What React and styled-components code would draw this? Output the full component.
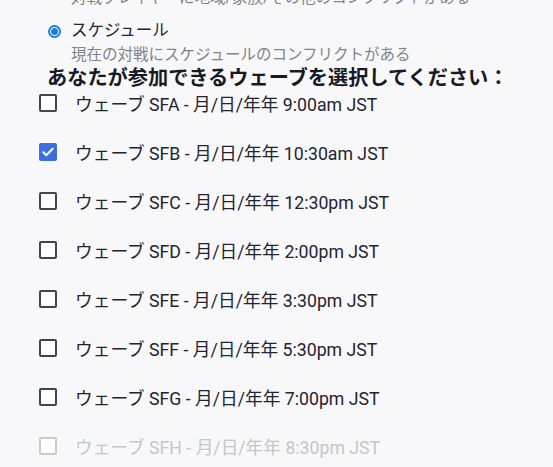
import styled, { createGlobalStyle } from "styled-components"

const GlobalStyle = createGlobalStyle`
  html, body {
    margin: 0;
    padding: 0;
    background: #f8f8fb;
  }
  body {
    font-family: Roboto, "Noto Sans CJK JP", sans-serif;
    color: #1f2430;
  }
`

const StPage = styled.div`
  margin-top: -13px;
  padding-left: 39px;
`

const StOptions = styled.div`
  display: flex;
  flex-direction: column;
  gap: 9px;
  padding-left: 9px;
`

const StOption = styled.label`
  display: grid;
  grid-template-columns: 13px 1fr;
  column-gap: 10px;
  align-items: center;
`

const StRadio = styled.span`
  width: 13px;
  height: 13px;
  box-sizing: border-box;
  border-radius: 50%;
  border: 2px solid ${p => (p.$checked ? "#1a7fd9" : "#767b85")};
  background: #fff;
  display: flex;
  align-items: center;
  justify-content: center;

  &::after {
    content: "";
    width: 7px;
    height: 7px;
    border-radius: 50%;
    background: ${p => (p.$checked ? "#1a7fd9" : "transparent")};
  }
`

const StOptionLabel = styled.span`
  font-size: 16.5px;
  line-height: 26px;
`

const StOptionDesc = styled.span`
  grid-column: 2;
  font-size: 15.5px;
  line-height: 22px;
  color: #7f848d;
`

const StHeading = styled.h3`
  margin: 0;
  padding-left: 8px;
  font-size: 20.2px;
  line-height: 24px;
  font-weight: 700;
  color: #161a24;
`

const StWaves = styled.div`
  display: flex;
  flex-direction: column;
  gap: 25px;
  margin-top: 1px;
`

const StWave = styled.label`
  display: flex;
  align-items: center;
  gap: 18px;
  height: 24px;
  font-size: 17.7px;
  color: ${p => (p.$disabled ? "#c3c6cc" : "#1f2430")};
`

const StBox = styled.span`
  flex: none;
  width: 18px;
  height: 18px;
  box-sizing: border-box;
  border-radius: 2px;
  border: 2px solid ${p => (p.$disabled ? "#c9ccd1" : p.$checked ? "#3a6fe2" : "#3d4452")};
  background: ${p => (p.$checked ? "#3a6fe2" : "#fff")};
  display: flex;
  align-items: center;
  justify-content: center;
`

const conflicts = [
  { label: "地域/家族/その他", desc: "対戦プレイヤーに地域/家族/その他のコンフリクトがある", checked: false, hideLabel: true },
  { label: "スケジュール", desc: "現在の対戦にスケジュールのコンフリクトがある", checked: true },
]

const waves = [
  { code: "SFA", time: "9:00am" },
  { code: "SFB", time: "10:30am", checked: true },
  { code: "SFC", time: "12:30pm" },
  { code: "SFD", time: "2:00pm" },
  { code: "SFE", time: "3:30pm" },
  { code: "SFF", time: "5:30pm" },
  { code: "SFG", time: "7:00pm" },
  { code: "SFH", time: "8:30pm", disabled: true },
]

function App () {
  return (
    <StPage>
      <GlobalStyle />
      <StOptions>
        {conflicts.map(c => (
          <StOption key={c.desc}>
            {!c.hideLabel && (
              <>
                <StRadio $checked={c.checked} />
                <StOptionLabel>{c.label}</StOptionLabel>
              </>
            )}
            <StOptionDesc>{c.desc}</StOptionDesc>
          </StOption>
        ))}
      </StOptions>
      <StHeading>あなたが参加できるウェーブを選択してください：</StHeading>
      <StWaves>
        {waves.map(w => (
          <StWave key={w.code} $disabled={w.disabled}>
            <StBox $checked={w.checked} $disabled={w.disabled}>
              {w.checked && (
                <svg width="14" height="14" viewBox="0 0 24 24" fill="none" stroke="#fff" strokeWidth="3.5" strokeLinecap="round" strokeLinejoin="round">
                  <path d="M4 12.5l5 5L20 6.5" />
                </svg>
              )}
            </StBox>
            <span>ウェーブ {w.code} - 月/日/年年 {w.time} JST</span>
          </StWave>
        ))}
      </StWaves>
    </StPage>
  )
}

export default App
